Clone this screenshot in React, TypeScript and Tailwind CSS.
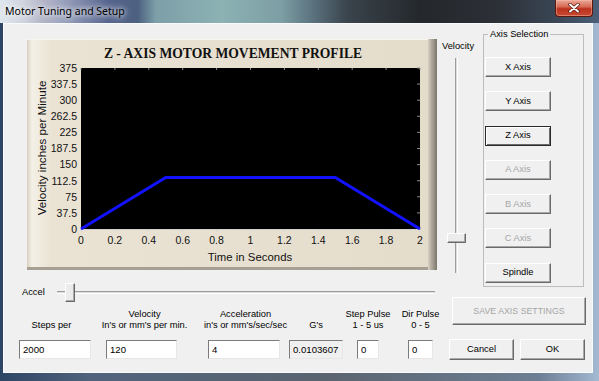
import React from "react";

const yLabels = ["375", "337.5", "300", "262.5", "225", "187.5", "150", "112.5", "75", "37.5", "0"];
const xLabels = ["0", "0.2", "0.4", "0.6", "0.8", "1", "1.2", "1.4", "1.6", "1.8", "2"];

function Chart() {
  const px0 = 54, px1 = 393, py0 = 29, py1 = 190;
  const w = px1 - px0, h = py1 - py0;
  const tx = (t: number) => px0 + (t / 2) * w;
  const vy = (v: number) => py1 - (v / 375) * h;
  const pts = [
    [tx(0), vy(0)],
    [tx(0.5), vy(120)],
    [tx(1.5), vy(120)],
    [tx(2), vy(0)],
  ]
    .map((p) => p.join(","))
    .join(" ");
  return (
    <svg width="410" height="231" viewBox="0 0 410 231" className="block">
      <defs>
        <linearGradient id="cbg" x1="0" x2="1" y1="0" y2="0">
          <stop offset="0" stopColor="#d7cfbe" />
          <stop offset="0.012" stopColor="#f4f0e7" />
          <stop offset="0.06" stopColor="#eae3d4" />
          <stop offset="1" stopColor="#e4dccb" />
        </linearGradient>
        <linearGradient id="cbev" x1="0" x2="1" y1="0" y2="0">
          <stop offset="0" stopColor="#d9d2c3" />
          <stop offset="0.35" stopColor="#b4ad9f" />
          <stop offset="1" stopColor="#7c766b" />
        </linearGradient>
      </defs>
      <rect x="0" y="0" width="410" height="231" fill="url(#cbg)" />
      <rect x="0" y="0" width="410" height="1" fill="#f7f4ee" />
      <rect x="401" y="0" width="9" height="231" fill="url(#cbev)" />
      <rect x="0" y="228" width="401" height="3" fill="#a7a092" />
      <text
        x="206"
        y="19"
        textAnchor="middle"
        fontFamily="'Liberation Serif', 'Times New Roman', serif"
        fontWeight="bold"
        fontSize="13.6"
        fill="#111"
      >
        Z - AXIS MOTOR MOVEMENT PROFILE
      </text>
      <rect x={px0} y={py0} width={w} height={h} fill="#000" />
      {xLabels.map((_, i) => {
        const x = px0 + (i * w) / 10;
        return (
          <g key={"xt" + i}>
            <line x1={x} y1={py0} x2={x} y2={py0 + 2} stroke="#8a8a8a" strokeWidth="1" />
            <line x1={x} y1={py1} x2={x} y2={py1 + 3} stroke="#d8d8d8" strokeWidth="1" />
          </g>
        );
      })}
      {yLabels.map((_, i) => {
        const y = py0 + (i * h) / 10;
        return <line key={"yt" + i} x1={px1 - 3} y1={y} x2={px1} y2={y} stroke="#8a8a8a" strokeWidth="1" />;
      })}
      <line x1={px0} y1={py1 + 0.5} x2={px1} y2={py1 + 0.5} stroke="#d0d0d0" strokeWidth="1" />
      <polyline points={pts} fill="none" stroke="#1212ff" strokeWidth="3" strokeLinejoin="miter" />
      {yLabels.map((l, i) => (
        <text
          key={"yl" + i}
          x="50"
          y={py0 + (i * h) / 10 + 3.8}
          textAnchor="end"
          fontFamily="'Liberation Sans', Arial, sans-serif"
          fontSize="10.5"
          fill="#111"
        >
          {l}
        </text>
      ))}
      {xLabels.map((l, i) => (
        <text
          key={"xl" + i}
          x={px0 + (i * w) / 10}
          y="205"
          textAnchor="middle"
          fontFamily="'Liberation Sans', Arial, sans-serif"
          fontSize="10.5"
          fill="#111"
        >
          {l}
        </text>
      ))}
      <text
        x="223"
        y="222"
        textAnchor="middle"
        fontFamily="'Liberation Sans', Arial, sans-serif"
        fontSize="11.4"
        fill="#111"
      >
        Time in Seconds
      </text>
      <text
        transform="translate(18.5 109) rotate(-90)"
        textAnchor="middle"
        fontFamily="'Liberation Sans', Arial, sans-serif"
        fontSize="11.6"
        fill="#111"
      >
        Velocity inches per Minute
      </text>
    </svg>
  );
}

function Btn({
  label,
  w = "w-[66px]",
  h = "h-[20px]",
  disabled = false,
  focused = false,
  small = false,
}: {
  label: string;
  w?: string;
  h?: string;
  disabled?: boolean;
  focused?: boolean;
  small?: boolean;
}) {
  const base = focused
    ? "border border-[#2a2a2a] shadow-[inset_1px_1px_0_#ffffff,inset_-1px_-1px_0_#6a6a6a]"
    : "border border-t-white border-l-white border-r-[#6a6a6a] border-b-[#6a6a6a] shadow-[inset_-1px_-1px_0_#a8a8a8]";
  return (
    <div
      className={`${w} ${h} ${base} bg-[#f0f0f0] flex items-center justify-center ${
        small ? "text-[8.8px]" : ""
      } ${disabled ? "text-[#a6a6a6]" : "text-black"}`}
    >
      {label}
    </div>
  );
}

function Field({
  ml,
  w,
  line1,
  line2,
  value,
  readOnly = false,
  labelShift = "",
}: {
  ml: string;
  w: string;
  line1?: string;
  line2: string;
  value: string;
  readOnly?: boolean;
  labelShift?: string;
}) {
  return (
    <div className={`${ml} ${w} flex flex-col items-center`}>
      <div className={`h-[22px] flex flex-col justify-end items-center whitespace-nowrap ${labelShift}`}>
        {line1 && <div>{line1}</div>}
        <div>{line2}</div>
      </div>
      <input
        readOnly
        defaultValue={value}
        className={`mt-[9px] ${w} h-[19px] pl-[3px] outline-none border border-t-[#7b7b7b] border-l-[#7b7b7b] border-r-[#e6e6e6] border-b-[#e6e6e6] text-[9.6px] text-black ${
          readOnly ? "bg-[#f0f0f0]" : "bg-white"
        }`}
      />
    </div>
  );
}

export default function App() {
  return (
    <div className="w-[599px] h-[381px] overflow-hidden flex flex-col bg-[linear-gradient(to_right,#2e4565_0%,#50637c_15%,#5b6470_55%,#6d7f94_90%,#a3bad2_100%)] font-['Liberation_Sans',Arial,sans-serif] text-black">
      {/* Title bar */}
      <div className="h-[23px] flex items-start justify-between bg-[linear-gradient(to_right,#e0e6ed_0%,#cdd4de_4%,#b5b6c8_7%,#9ea6c0_10%,#56648e_18%,#4c6080_23%,#7d9fa8_26%,#8cb2b4_37%,#7c9ea4_47%,#5c7480_52%,#3a444c_58%,#24282c_70%,#2c3036_83%,#3a4656_93%,#4a6078_100%)]">
        <span className="ml-[5px] mt-[4px] font-['Noto_Sans',sans-serif] text-[10.5px] leading-[14px] text-black [text-shadow:0_0_5px_#ffffff,0_0_8px_#ffffff]">
          Motor Tuning and Setup
        </span>
        <div className="mr-[6px] w-[38px] h-[17px] rounded-b-[4px] border border-t-0 border-[#5c1710] bg-[linear-gradient(to_bottom,#eaa898_0%,#d66a54_42%,#bb321e_55%,#c84a30_100%)] shadow-[inset_0_0_0_1px_rgba(255,190,175,0.45)] flex items-center justify-center">
          <svg width="12" height="10" viewBox="0 0 12 10">
            <path d="M2 1.5 L10 8.5 M10 1.5 L2 8.5" stroke="#5a1a12" strokeWidth="3.4" strokeLinecap="round" />
            <path d="M2 1.5 L10 8.5 M10 1.5 L2 8.5" stroke="#ffffff" strokeWidth="1.9" strokeLinecap="round" />
          </svg>
        </div>
      </div>

      {/* Frame body */}
      <div className="flex-1 flex pl-[3px] pr-[6px] pb-[8px]">
        <div className="flex-1 border border-[#f8fafc] bg-[#f0f0f0] flex pt-[4px] text-[9.3px] leading-[11px]">
          {/* Column A */}
          <div className="w-[436px] flex flex-col">
            <div className="mt-[11px] ml-[23px] w-[410px] h-[231px]">
              <Chart />
            </div>
            <div className="mt-[13px] h-[19px] flex items-center">
              <div className="w-[53px] pl-[18px]">Accel</div>
              <div className="relative w-[378px] h-full flex items-center">
                <div className="w-full h-[3px] border-t border-t-[#9c9c9c] border-b border-b-white bg-[#dcdcdc]" />
                <div className="absolute left-[8px] top-0 w-[10px] h-[19px] bg-[#ececec] border border-t-white border-l-white border-r-[#6a6a6a] border-b-[#6a6a6a] shadow-[inset_-1px_-1px_0_#a8a8a8]" />
              </div>
            </div>
            <div className="mt-[7px] flex">
              <Field ml="ml-[15px]" w="w-[72px]" line2="Steps per" value="2000" labelShift="pr-[7px]" />
              <Field
                ml="ml-[15px]"
                w="w-[71px]"
                line1="Velocity"
                line2="In's or mm's per min."
                value="120"
                labelShift="pl-[6px]"
              />
              <Field
                ml="ml-[31px]"
                w="w-[72px]"
                line1="Acceleration"
                line2="in's or mm's/sec/sec"
                value="4"
                labelShift="pl-[3px]"
              />
              <Field ml="ml-[9px]" w="w-[54px]" line2="G's" value="0.0103607" readOnly />
              <Field ml="ml-[14px]" w="w-[22px]" line1="Step Pulse" line2="1 - 5 us" value="0" />
              <Field ml="ml-[29px]" w="w-[25px]" line1="Dir Pulse" line2="0 - 5" value="0" />
            </div>
          </div>

          {/* Column B */}
          <div className="w-[152px] flex flex-col">
            <div className="h-[259px] flex">
              <div className="w-[43px] flex flex-col">
                <div className="mt-[12.5px] pl-[2px]">Velocity</div>
                <div className="relative mt-[6.5px] h-[215px]">
                  <div className="ml-[15px] w-[3px] h-full border-l border-l-[#9c9c9c] border-r border-r-white bg-[#dcdcdc]" />
                  <div className="absolute left-[7px] top-[175px] w-[19px] h-[10px] bg-[#ececec] border border-t-white border-l-white border-r-[#6a6a6a] border-b-[#6a6a6a] shadow-[inset_-1px_-1px_0_#a8a8a8]" />
                </div>
              </div>
              <fieldset className="w-[101px] h-[259px] border border-[#bdbdbd] pl-[1px]">
                <legend className="ml-[3px] px-[2px] leading-[12px]">Axis Selection</legend>
                <div className="mt-[17px] flex flex-col gap-[14.3px]">
                  <Btn label="X Axis" />
                  <Btn label="Y Axis" />
                  <Btn label="Z Axis" focused />
                  <Btn label="A Axis" disabled />
                  <Btn label="B Axis" disabled />
                  <Btn label="C Axis" disabled />
                  <Btn label="Spindle" />
                </div>
              </fieldset>
            </div>
            <div className="mt-[10px] ml-[12px]">
              <Btn label="SAVE AXIS SETTINGS" w="w-[134px]" h="h-[28px]" disabled small />
            </div>
            <div className="mt-[14px] ml-[9px] flex gap-[6px]">
              <Btn label="Cancel" w="w-[65px]" h="h-[21px]" />
              <Btn label="OK" w="w-[65px]" h="h-[21px]" />
            </div>
          </div>
        </div>
      </div>
    </div>
  );
}
